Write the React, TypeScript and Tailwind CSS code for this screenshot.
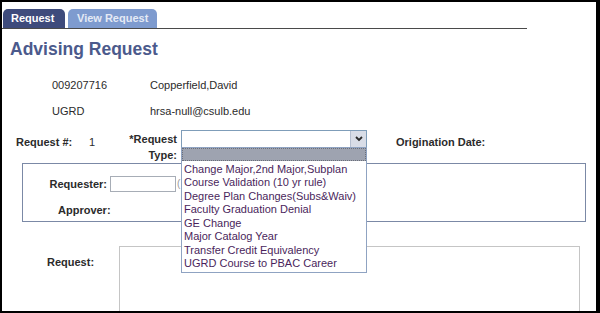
import React from "react";

const items = [
  "Change Major,2nd Major,Subplan",
  "Course Validation (10 yr rule)",
  "Degree Plan Changes(Subs&Waiv)",
  "Faculty Graduation Denial",
  "GE Change",
  "Major Catalog Year",
  "Transfer Credit Equivalency",
  "UGRD Course to PBAC Career",
];

export default function App() {
  return (
    <div className="w-[600px] h-[313px] overflow-hidden border-l-[2px] border-t-[2px] border-r-[4px] border-b-[2px] border-black bg-white font-['Liberation_Sans',Arial,sans-serif] text-[11px] text-[#2b2b2b]">
      {/* Tabs */}
      <div className="flex items-end gap-[3px] h-[27px] w-[525px] border-b border-[#4a4a4a] pl-[1px]">
        <div className="w-[62px] h-[19px] rounded-t-[5px] bg-[#3e4b7c] text-white font-bold text-[11px] leading-[19px] pl-[8px]">
          Request
        </div>
        <div className="w-[89px] h-[19px] rounded-t-[5px] bg-[#7e9bcf] text-[#e4eaf5] font-bold text-[11px] leading-[19px] pl-[9px]">
          View Request
        </div>
      </div>

      {/* Title */}
      <div className="mt-[10px] pl-[8px] text-[17.5px] leading-[21px] font-bold text-[#4b5a8c]">
        Advising Request
      </div>

      {/* Info rows */}
      <div className="mt-[18px] flex leading-[14px] pl-[50px]">
        <div className="w-[98px]">009207716</div>
        <div>Copperfield,David</div>
      </div>
      <div className="mt-[12px] flex leading-[14px] pl-[50px]">
        <div className="w-[98px]">UGRD</div>
        <div>hrsa-null@csulb.edu</div>
      </div>

      {/* Request # row */}
      <div className="mt-[14px] h-[31px] flex items-start pl-[14px] leading-[14px]">
        <div className="w-[73px] mt-[3px] font-bold">Request #:</div>
        <div className="w-[15px] mt-[3px]">1</div>
        <div className="w-[73px] text-right font-bold">
          <div>*Request</div>
          <div className="mt-[2px]">Type:</div>
        </div>
        <div className="relative ml-[4px] -mt-[2px] w-[186px] h-[18px] border border-[#7f9db9] bg-white">
          <div className="absolute right-0 top-0 w-[16px] h-[16px] bg-[#d9dde7] border-l border-[#b6bfd0] flex items-center justify-center">
            <svg width="8" height="6" viewBox="0 0 8 6">
              <path d="M1 1 L4 4 L7 1" stroke="#2a2a2a" strokeWidth="1.8" fill="none" />
            </svg>
          </div>
          {/* Dropdown list */}
          <div className="absolute left-[-1px] top-[16px] w-[186px] h-[126px] border border-[#8fa3c2] bg-white z-10">
            <div className="h-[13px] bg-[#9ea3b0] border border-dotted border-[#6b6f7a]" />
            <div className="pt-[2px] pl-[2px] text-[11px] leading-[13.45px] text-[#4a1f5c]">
              {items.map((t) => (
                <div key={t} className="whitespace-nowrap">{t}</div>
              ))}
            </div>
          </div>
        </div>
        <div className="ml-[29px] mt-[3px] font-bold">Origination Date:</div>
      </div>

      {/* Group box */}
      <div className="ml-[20px] w-[564px] h-[59px] border border-[#7b89a6]">
        <div className="mt-[12px] flex items-center leading-[14px]">
          <div className="w-[84px] text-right font-bold">Requester:</div>
          <div className="ml-[3px] w-[66px] h-[16px] border border-[#a7adb6] bg-white" />
          <div className="ml-[1px] text-[#999] text-[10px]">(</div>
        </div>
        <div className="mt-[11px] pl-[35px] leading-[14px] font-bold">Approver:</div>
      </div>

      {/* Request textarea */}
      <div className="mt-[24px] flex items-start">
        <div className="w-[117px] pl-[45px] mt-[9px] leading-[14px] font-bold">Request:</div>
        <div className="w-[461px] h-[80px] border border-[#c5c5c5]" />
      </div>
    </div>
  );
}
